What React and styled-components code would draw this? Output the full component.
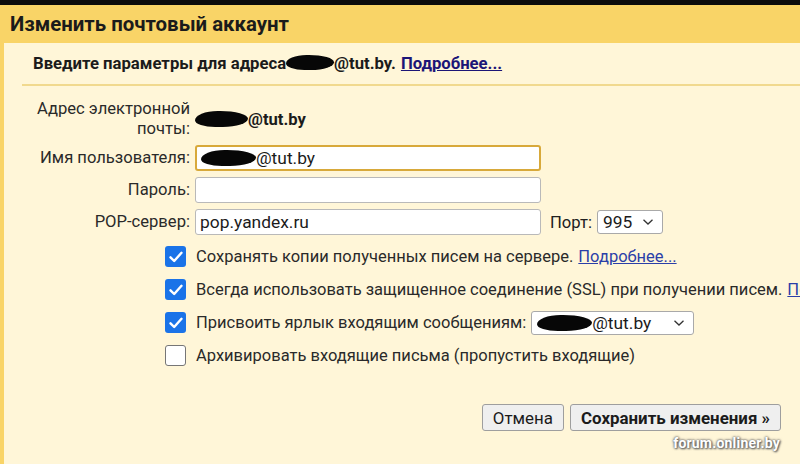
import React from "react";
import styled, { createGlobalStyle } from "styled-components";

const Global = createGlobalStyle`
  html, body { margin: 0; padding: 0; }
  body {
    width: 800px; height: 464px; overflow: hidden;
    background: #fff6d8;
    font-family: Roboto, "Noto Sans", "Liberation Sans", sans-serif;
    color: #202020;
  }
`;

const Page = styled.div`
  width: 800px; height: 464px; display: flex; flex-direction: column; position: relative; overflow: hidden;
`;
const TopBar = styled.div` height: 5px; background: #0c0c0c; `;
const Header = styled.div`
  height: 38px; background: #f9d467; display: flex; align-items: center; padding-left: 10px;
`;
const Title = styled.h1`
  margin: 0; font-size: 20.4px; font-weight: 700; color: #1b1b1b;
`;
const Panel = styled.div`
  flex: 1; border-left: 4px solid #f9d467; background: #fff6d8; display: flex; flex-direction: column;
`;
const Intro = styled.div`
  height: 41px; display: flex; align-items: center; padding-left: 29px;
  font-size: 16.7px; font-weight: 700; color: #1b1b1b; white-space: nowrap;
`;
const Separator = styled.div`
  margin-left: 18px; border-top: 2px solid #f1d98e;
`;
const Link = styled.a`
  color: ${p => (p.$bold ? "#1c1577" : "#2b3fa8")};
  text-decoration: underline; margin-left: 5px; cursor: pointer;
`;
const Censor = styled.span`
  display: inline-block; vertical-align: middle;
  width: ${p => p.$w}px; height: ${p => p.$h}px;
  background: #070707; border-radius: 45% 55% 50% 40% / 60% 50% 55% 45%;
  position: relative; top: ${p => p.$dy || 0}px;
`;
const Form = styled.div`
  display: grid; grid-template-columns: 186px auto; column-gap: 5px; row-gap: 6px;
  padding-top: 13px; align-items: center; font-size: 16.6px;
`;
const Label = styled.div`
  text-align: right; line-height: 20px; color: #2a2a2a; white-space: nowrap;
`;
const Value = styled.div`
  font-weight: 700; display: flex; align-items: center; color: #1b1b1b;
`;
const FieldRow = styled.div` display: flex; align-items: center; gap: 9px; `;
const Input = styled.div`
  box-sizing: border-box; width: 346px; height: 26px; background: #fff;
  border: ${p => (p.$focus ? "2px solid #d8a93a" : "1px solid #b9b9b9")};
  border-radius: 3px; display: flex; align-items: center;
  padding-left: 4px; font-size: 17.4px; color: #1b1b1b;
`;
const Select = styled.div`
  box-sizing: border-box; flex: none; width: ${p => p.$w}px; height: 24px; background: #fff;
  border: 1px solid #a9a9a9; border-radius: 3px; display: flex; align-items: center;
  justify-content: space-between; padding: 0 8px 0 5px; font-size: 17.4px; color: #1b1b1b;
  margin-left: ${p => p.$ml || 0}px;
`;
const Inline = styled.span` display: flex; align-items: center; `;
const Checks = styled.div`
  display: flex; flex-direction: column; gap: 12px; padding: 11px 0 0 161px; font-size: 16.5px;
`;
const CheckRow = styled.div`
  display: flex; align-items: center; gap: 10px; height: 21px; white-space: nowrap; color: #2a2a2a;
`;
const Box = styled.span`
  box-sizing: border-box; flex: none; width: 21px; height: 21px; border-radius: 3px;
  display: flex; align-items: center; justify-content: center;
  background: ${p => (p.$on ? "#1a73e8" : "#fff")};
  border: ${p => (p.$on ? "none" : "1.5px solid #767676")};
`;
const Buttons = styled.div`
  display: flex; justify-content: flex-end; gap: 6px; padding: 38px 19px 0 0;
`;
const Button = styled.button`
  height: 27px; padding: 0 10px; font-family: inherit; font-size: 16.9px;
  font-weight: ${p => (p.$primary ? 700 : 400)};
  color: #1b1b1b; background: #efefef; border: 1px solid #9e9e9e; border-radius: 3px;
`;
const Watermark = styled.div`
  position: absolute; right: 20px; bottom: 13px; font-size: 14px; font-weight: 700;
  color: #fff; text-shadow: 0 0 3px #666, 0 0 2px #777, 1px 1px 2px #555; letter-spacing: 0.2px;
`;

const Tick = () => (
  <svg width="14" height="12" viewBox="0 0 14 12">
    <path d="M1.5 6.3 L5.2 10 L12.5 1.8" fill="none" stroke="#fff" strokeWidth="2.4" strokeLinecap="round" strokeLinejoin="round" />
  </svg>
);
const Chevron = () => (
  <svg width="12" height="8" viewBox="0 0 12 8">
    <path d="M1.5 1.8 L6 6 L10.5 1.8" fill="none" stroke="#333" strokeWidth="1.3" />
  </svg>
);

export default function App() {
  return (
    <>
      <Global />
      <Page>
        <TopBar />
        <Header><Title>Изменить почтовый аккаунт</Title></Header>
        <Panel>
          <Intro>
            Введите параметры для адреса<Censor $w={48} $h={15} $dy={-1} />@tut.by.
            <Link $bold>Подробнее...</Link>
          </Intro>
          <Separator />
          <Form>
            <Label>Адрес электронной<br />почты:</Label>
            <Value><Censor $w={53} $h={16} />@tut.by</Value>
            <Label>Имя пользователя:</Label>
            <Input $focus><Censor $w={55} $h={16} />@tut.by</Input>
            <Label>Пароль:</Label>
            <Input />
            <Label>POP-сервер:</Label>
            <FieldRow>
              <Input>pop.yandex.ru</Input>
              <span>Порт:</span>
              <Select $w={66} $ml={-4}>995<Chevron /></Select>
            </FieldRow>
          </Form>
          <Checks>
            <CheckRow><Box $on><Tick /></Box><span>Сохранять копии полученных писем на сервере.<Link>Подробнее...</Link></span></CheckRow>
            <CheckRow><Box $on><Tick /></Box><span>Всегда использовать защищенное соединение (SSL) при получении писем.<Link>Подробнее...</Link></span></CheckRow>
            <CheckRow>
              <Box $on><Tick /></Box>Присвоить ярлык входящим сообщениям:
              <Select $w={163} $ml={-5}><Inline><Censor $w={55} $h={16} />@tut.by</Inline><Chevron /></Select>
            </CheckRow>
            <CheckRow><Box /><span>Архивировать входящие письма (пропустить входящие)</span></CheckRow>
          </Checks>
          <Buttons>
            <Button>Отмена</Button>
            <Button $primary>Сохранить изменения »</Button>
          </Buttons>
        </Panel>
        <Watermark>forum.onliner.by</Watermark>
      </Page>
    </>
  );
}
